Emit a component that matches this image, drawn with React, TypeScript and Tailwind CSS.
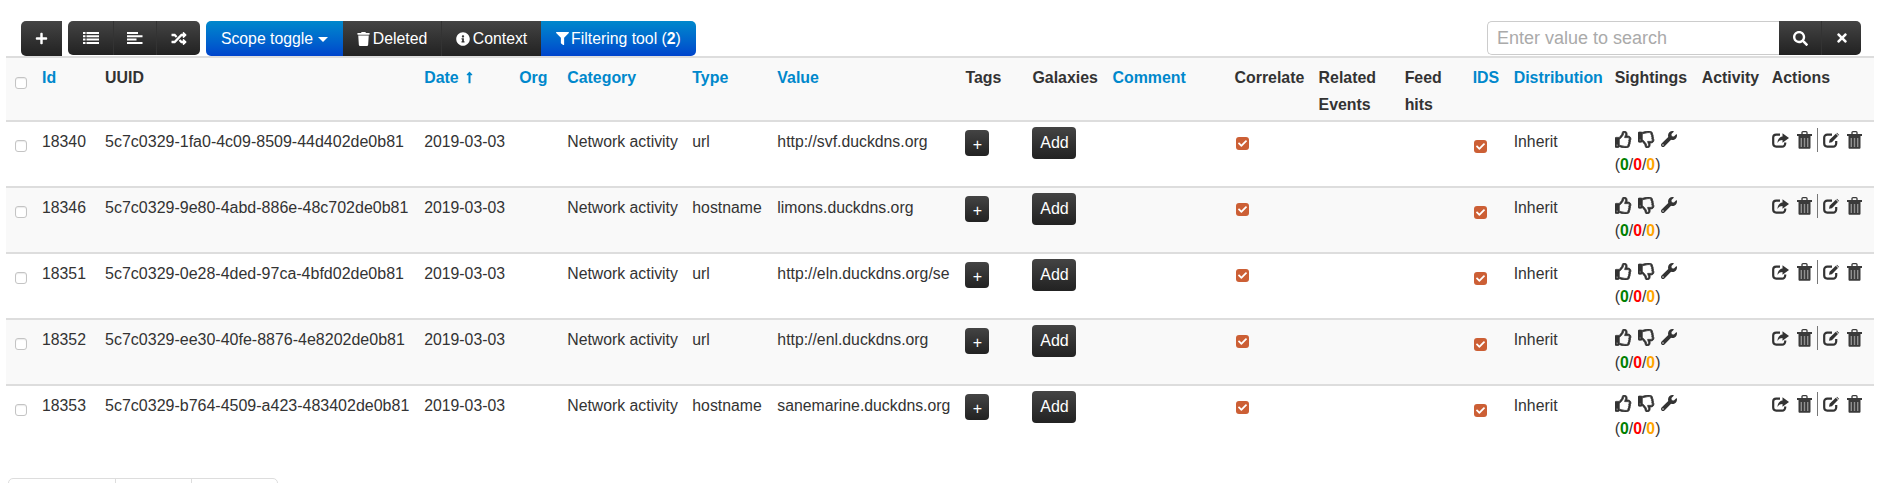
import type { ReactNode } from "react";
import {
  FaPlus,
  FaRandom,
  FaTrash,
  FaInfoCircle,
  FaFilter,
  FaSearch,
  FaTimes,
  FaRegThumbsUp,
  FaRegThumbsDown,
  FaWrench,
  FaCheck,
  FaLongArrowAltUp,
} from "react-icons/fa";

const rows = [
  { id: "18340", uuid: "5c7c0329-1fa0-4c09-8509-44d402de0b81", type: "url", value: "http://svf.duckdns.org" },
  { id: "18346", uuid: "5c7c0329-9e80-4abd-886e-48c702de0b81", type: "hostname", value: "limons.duckdns.org" },
  { id: "18351", uuid: "5c7c0329-0e28-4ded-97ca-4bfd02de0b81", type: "url", value: "http://eln.duckdns.org/se" },
  { id: "18352", uuid: "5c7c0329-ee30-40fe-8876-4e8202de0b81", type: "url", value: "http://enl.duckdns.org" },
  { id: "18353", uuid: "5c7c0329-b764-4509-a423-483402de0b81", type: "hostname", value: "sanemarine.duckdns.org" },
];

const colWidths = ["w-[27px]", "w-[63px]", "w-[319px]", "w-[95px]", "w-[48px]", "w-[125px]", "w-[85px]", "w-[188px]", "w-[67px]", "w-[80px]", "w-[122px]", "w-[84px]", "w-[86px]", "w-[68px]", "w-[41px]", "w-[101px]", "w-[87px]", "w-[70px]", "w-[111px]"];

const dark = "bg-gradient-to-b from-[#444444] to-[#222222] text-white";
const blue = "bg-gradient-to-b from-[#0088cc] to-[#0044cc] text-white";

function ListIcon() {
  return (
    <svg width="16" height="14" viewBox="0 0 16 14" fill="currentColor">
      <path d="M0 1h2.5v2H0zM3.5 1H16v2H3.5zM0 4.3h2.5v2H0zM3.5 4.3H16v2H3.5zM0 7.6h2.5v2H0zM3.5 7.6H16v2H3.5zM0 10.9h2.5v2H0zM3.5 10.9H16v2H3.5z" />
    </svg>
  );
}

function AlignIcon() {
  return (
    <svg width="16" height="14" viewBox="0 0 16 14" fill="currentColor">
      <path d="M0 1h11v2H0zM0 4.3h15.5v2H0zM0 7.6h9.5v2H0zM0 10.9h15.5v2H0z" />
    </svg>
  );
}

function TrashIcon() {
  return (
    <svg width="15" height="18" viewBox="0 0 15 18" fill="none">
      <path d="M5 3V1.6C5 1 5.4.7 6 .7h3c.6 0 1 .3 1 .9V3" stroke="#3a3a3a" strokeWidth="1.3" />
      <path d="M0 3h15v2H0z" fill="#3a3a3a" />
      <path d="M1.5 5h12v11.5c0 .8-.5 1.3-1.2 1.3H2.7c-.7 0-1.2-.5-1.2-1.3z" fill="#3a3a3a" />
      <path d="M3.6 7h1.4v9H3.6zM6.8 7h1.4v9H6.8zM10 7h1.4v9H10z" fill="#8f8f8f" />
    </svg>
  );
}

function ShareIcon() {
  return (
    <svg width="17" height="16" viewBox="0 0 17 16" fill="none">
      <path d="M8 2.6H4.2A3 3 0 0 0 1.2 5.6v6a3 3 0 0 0 3 3h6a3 3 0 0 0 3-3v-1" stroke="#333333" strokeWidth="2.2" />
      <path d="M10.5 1.2 17 6l-6.500 4.800V8C8 8 6.400 9 5.500 11 5.500 7.500 7.500 4.800 10.500 4.500z" fill="#333333" />
    </svg>
  );
}

function EditIcon() {
  return (
    <svg width="17" height="16" viewBox="0 0 17 16" fill="none">
      <path d="M9 2.600H4.200a3 3 0 0 0-3 3v6a3 3 0 0 0 3 3h6a3 3 0 0 0 3-3V9" stroke="#333333" strokeWidth="2.200" />
      <path d="M6 10.800 6.600 7.800 12.800 1.800 15 4 8.900 10.200z" fill="#333333" />
      <path d="M14 .8 16.200 3 15.600 3.500 13.400 1.300z" fill="#333333" />
    </svg>
  );
}

function Th({ children, link }: { children?: ReactNode; link?: boolean }) {
  return (
    <th className={`h-[64px] px-[9px] pt-[6px] align-top text-left text-[15.9px] font-bold leading-[27px] ${link ? "text-[#0088cc]" : "text-[#333333]"}`}>
      {children}
    </th>
  );
}

function Checkbox() {
  return <span className="block w-[12px] h-[12px] rounded-[3px] border border-[#c4c4c4] bg-white shadow-[inset_0_1px_1px_rgba(0,0,0,0.08)]" />;
}

function Checked() {
  return (
    <span className="flex items-center justify-center w-[13px] h-[13px] rounded-[3px] bg-[#cc5f35]">
      <FaCheck className="w-[9px] h-[9px] text-white" />
    </span>
  );
}

function Row({ row, striped }: { row: (typeof rows)[number]; striped: boolean }) {
  const td = "px-[9px] align-top h-[66px] border-t-2 border-[#dddddd]";
  const text = `${td} pt-[7px] leading-[25px] whitespace-nowrap`;
  return (
    <tr className={striped ? "bg-[#f9f9f9]" : "bg-white"}>
      <td className={`${td} pt-[18px]`}>
        <Checkbox />
      </td>
      <td className={text}>{row.id}</td>
      <td className={`${text} text-[16px]`}>{row.uuid}</td>
      <td className={text}>2019-03-03</td>
      <td className={td} />
      <td className={text}>Network activity</td>
      <td className={text}>{row.type}</td>
      <td className={text}>{row.value}</td>
      <td className={`${td} pt-[8px]`}>
        <span className={`flex items-end justify-center w-[24px] h-[26px] rounded-[4px] ${dark} text-[16px] leading-[20px] pb-[1px]`}>+</span>
      </td>
      <td className={`${td} pt-[5px]`}>
        <span className={`flex items-center justify-center w-[44px] h-[32px] rounded-[4px] ${dark} text-[16px]`}>Add</span>
      </td>
      <td className={td} />
      <td className={`${td} pl-[10px] pt-[15px]`}>
        <Checked />
      </td>
      <td className={td} />
      <td className={td} />
      <td className={`${td} pl-[10px] pt-[18px]`}>
        <Checked />
      </td>
      <td className={text}>Inherit</td>
      <td className={`${td} pt-[8px]`} colSpan={2}>
        <div className="flex items-center gap-[6px] h-[18px] text-[#333333]">
          <FaRegThumbsUp className="w-[17px] h-[17px] stroke-[24]" />
          <FaRegThumbsDown className="w-[17px] h-[17px] stroke-[24]" />
          <FaWrench className="w-[16px] h-[16px]" />
        </div>
        <div className="mt-[7px] leading-[20px] whitespace-nowrap">
          (<span className="font-bold text-[#008000]">0</span>/<span className="font-bold text-[#ff0000]">0</span>/<span className="font-bold text-[#ffa500]">0</span>)
        </div>
      </td>
      <td className={`${td} pt-[6px]`}>
        <div className="flex items-center h-[24px]">
          <span className="mr-[8px]">
            <ShareIcon />
          </span>
          <TrashIcon />
          <span className="w-px h-[24px] bg-[#777777] mx-[5px]" />
          <span className="mr-[7px]">
            <EditIcon />
          </span>
          <TrashIcon />
        </div>
      </td>
    </tr>
  );
}

function Toolbar() {
  const seg = "flex items-center justify-center h-full";
  return (
    <div className="flex items-start h-[35px] mt-[21px] ml-[21px] text-[15.8px] leading-none">
      <div className={`${seg} w-[41px] h-[34px] rounded-l-[5px] ${dark}`}>
        <FaPlus className="w-[13px] h-[13px]" />
      </div>
      <div className="flex h-[34px] ml-[6px] rounded-[5px] overflow-hidden">
        <div className={`${seg} w-[45px] ${dark}`}>
          <ListIcon />
        </div>
        <div className={`${seg} w-[43px] border-l border-[#333333] ${dark}`}>
          <AlignIcon />
        </div>
        <div className={`${seg} w-[44px] border-l border-[#333333] ${dark}`}>
          <FaRandom className="w-[16px] h-[15px]" />
        </div>
      </div>
      <div className="flex h-[35px] ml-[6px] rounded-[5px] overflow-hidden">
        <div className={`${seg} w-[137px] gap-[5px] ${blue}`}>
          Scope toggle
          <span className="mt-[1px] border-x-[5px] border-t-[5px] border-x-transparent border-t-white" />
        </div>
        <div className={`${seg} w-[98px] gap-[3px] ${dark}`}>
          <FaTrash className="w-[13px] h-[14px]" />
          Deleted
        </div>
        <div className={`${seg} w-[100px] gap-[3px] border-l border-[#333333] ${dark}`}>
          <FaInfoCircle className="w-[14px] h-[14px]" />
          Context
        </div>
        <div className={`${seg} w-[155px] gap-[2px] ${blue}`}>
          <FaFilter className="w-[13px] h-[13px]" />
          <span>
            Filtering tool (<b>2</b>)
          </span>
        </div>
      </div>
      <div className="flex h-[34px] ml-auto mr-[16px]">
        <div className="flex items-center w-[292px] pl-[9px] rounded-l-[5px] border border-r-0 border-[#cccccc] bg-white text-[18px] text-[#aaaaaa]">
          Enter value to search
        </div>
        <div className={`${seg} w-[42px] ${dark}`}>
          <FaSearch className="w-[15px] h-[15px]" />
        </div>
        <div className={`${seg} w-[40px] rounded-r-[5px] border-l border-[#333333] ${dark}`}>
          <FaTimes className="w-[14px] h-[14px]" />
        </div>
      </div>
    </div>
  );
}

export default function App() {
  return (
    <div className="h-[483px] overflow-hidden bg-white text-[15.8px] text-[#333333] font-['Liberation_Sans',Arial,sans-serif]">
      <Toolbar />
      <table className="table-fixed ml-[6px] w-[1868px] border-collapse">
        <colgroup>
          {colWidths.map((w, i) => (
            <col key={i} className={w} />
          ))}
        </colgroup>
        <thead>
          <tr className="bg-[#f9f9f9] border-t-2 border-[#dddddd]">
            <th className="h-[64px] pl-[9px] pt-[19px] align-top">
              <Checkbox />
            </th>
            <Th link>Id</Th>
            <Th>UUID</Th>
            <Th link>
              <span className="inline-flex items-center gap-[6px]">
                Date
                <FaLongArrowAltUp className="w-[9px] h-[13px]" />
              </span>
            </Th>
            <Th link>Org</Th>
            <Th link>Category</Th>
            <Th link>Type</Th>
            <Th link>Value</Th>
            <Th>Tags</Th>
            <Th>Galaxies</Th>
            <Th link>Comment</Th>
            <Th>Correlate</Th>
            <Th>Related Events</Th>
            <Th>Feed hits</Th>
            <Th link>IDS</Th>
            <Th link>Distribution</Th>
            <Th>Sightings</Th>
            <Th>Activity</Th>
            <Th>Actions</Th>
          </tr>
        </thead>
        <tbody>
          {rows.map((row, i) => (
            <Row key={row.id} row={row} striped={i % 2 === 1} />
          ))}
        </tbody>
      </table>
      <div className="flex w-[270px] h-[32px] mt-[27px] ml-[8px] rounded-t-[5px] border border-[#dddddd]">
        <span className="w-[107px] border-r border-[#dddddd]" />
        <span className="w-[76px] border-r border-[#dddddd]" />
      </div>
    </div>
  );
}
